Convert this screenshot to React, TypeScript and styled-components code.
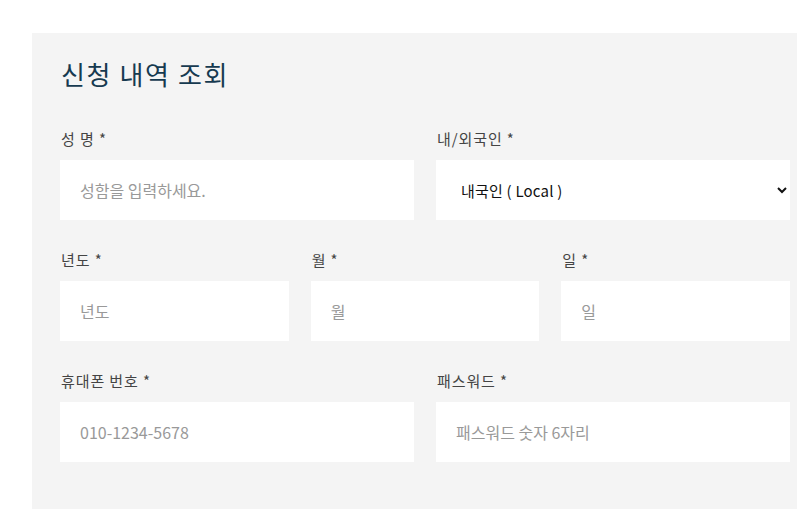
import React from "react";
import styled, { createGlobalStyle } from "styled-components";

const Global = createGlobalStyle`
  html, body { margin: 0; padding: 0; background: #ffffff; overflow: hidden; }
  body { font-family: "Noto Sans CJK KR", "Noto Sans", sans-serif; }
  * { box-sizing: border-box; }
`;

const Page = styled.div`
  padding: 33px 0 0 32px;
  height: 509px;
`;

const Panel = styled.section`
  width: 786px;
  height: 100%;
  background: #f4f4f4;
  padding: 24px 28px 0 28px;
`;

const Title = styled.h2`
  margin: 0 0 39px 1px;
  font-size: 26px;
  line-height: 34px;
  font-weight: 400;
  color: #163a50;
  letter-spacing: 1.6px;
`;

const Row = styled.div<{ $cols: number }>`
  display: grid;
  grid-template-columns: repeat(${(p) => p.$cols}, 1fr);
  column-gap: 22px;
  margin-bottom: 31px;
`;

const Field = styled.div`
  display: flex;
  flex-direction: column;
`;

const Label = styled.label`
  font-size: 15px;
  line-height: 17px;
  color: #444444;
  letter-spacing: 0.9px;
  margin: 0 0 13px 1px;
`;

const Input = styled.input`
  height: 60px;
  border: none;
  outline: none;
  background: #ffffff;
  padding: 0 20px;
  font-family: "Noto Sans CJK KR", "Noto Sans", sans-serif;
  font-size: 16px;
  color: #333;
  &::placeholder { color: #999999; }
`;

const Select = styled.select`
  height: 60px;
  border: none;
  outline: none;
  background: #ffffff;
  padding: 0 4px 0 21px;
  font-family: "Noto Sans CJK KR", "Noto Sans", sans-serif;
  font-size: 15px;
  letter-spacing: 0.2px;
  color: #111;
`;

export default function App() {
  return (
    <>
      <Global />
      <Page>
        <Panel>
          <Title>신청 내역 조회</Title>
          <Row $cols={2}>
            <Field>
              <Label>성 명 *</Label>
              <Input placeholder="성함을 입력하세요." />
            </Field>
            <Field>
              <Label>내/외국인 *</Label>
              <Select defaultValue="local">
                <option value="local">내국인 ( Local )</option>
                <option value="foreign">외국인 ( Foreigner )</option>
              </Select>
            </Field>
          </Row>
          <Row $cols={3}>
            <Field>
              <Label>년도 *</Label>
              <Input placeholder="년도" />
            </Field>
            <Field>
              <Label>월 *</Label>
              <Input placeholder="월" />
            </Field>
            <Field>
              <Label>일 *</Label>
              <Input placeholder="일" />
            </Field>
          </Row>
          <Row $cols={2}>
            <Field>
              <Label>휴대폰 번호 *</Label>
              <Input placeholder="010-1234-5678" />
            </Field>
            <Field>
              <Label>패스워드 *</Label>
              <Input type="password" placeholder="패스워드 숫자 6자리" />
            </Field>
          </Row>
        </Panel>
      </Page>
    </>
  );
}
